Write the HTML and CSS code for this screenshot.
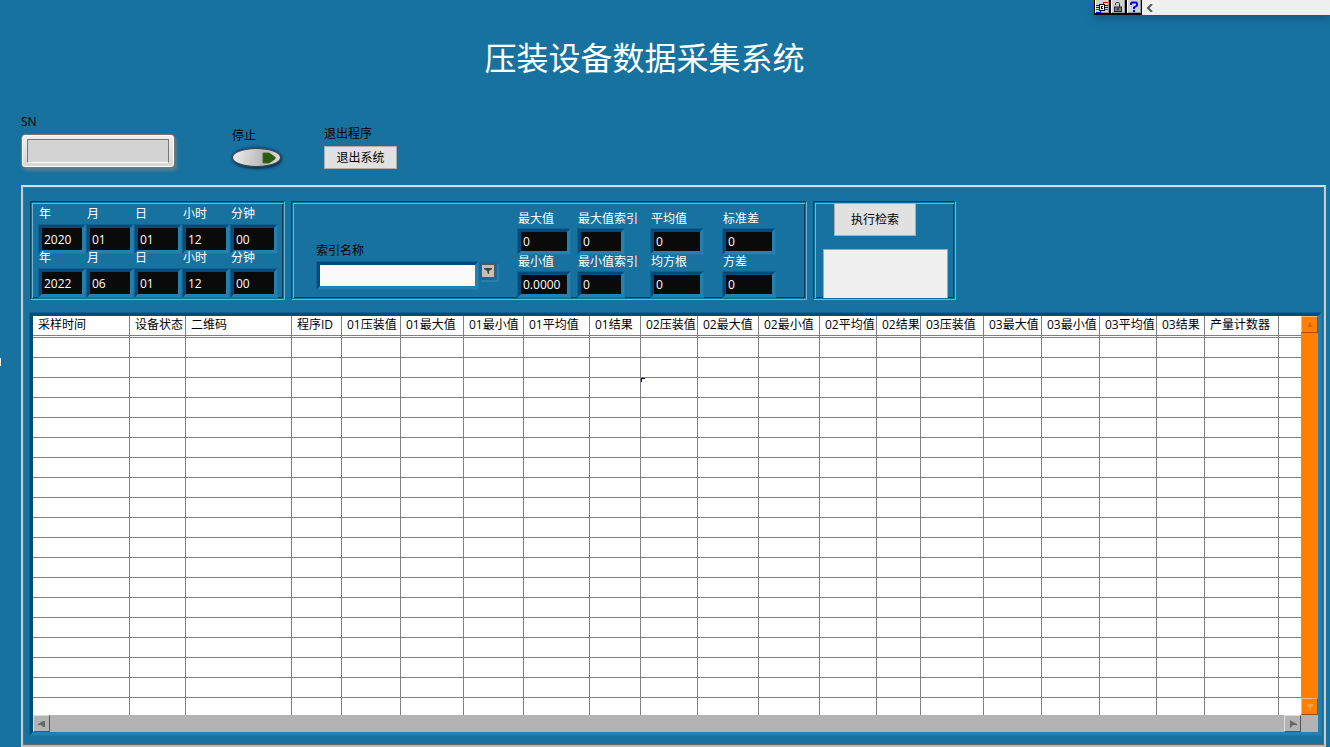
FILE: index.html
```html
<!DOCTYPE html>
<html lang="zh-CN">
<head>
<meta charset="utf-8">
<title>压装设备数据采集系统</title>
<link rel="stylesheet" href="styles.css">
</head>
<body>
<div class="tools">
  <button class="tool" type="button" aria-label="连线板">
    <svg viewBox="0 0 14 12" width="14" height="12" shape-rendering="crispEdges" fill="none">
      <path d="M1 4.500h4M1 6.500h4M1 11.500h4v-2" stroke="#00f"/><path d="M1 8.500h3M8.500 4V1.500H13" stroke="#e00"/><path d="M10 4.500h3M10 6.500h3" stroke="#00f"/><path d="M10 8.500h3" stroke="#e00"/>
      <rect x="4.500" y="3.500" width="5" height="6" fill="#fff" stroke="#000"/><path d="M6 5.500h2M6.500 5v3M6 7.500h2" stroke="#000"/>
    </svg>
  </button>
  <button class="tool" type="button" aria-label="锁定">
    <svg viewBox="0 0 14 12" width="14" height="12" fill="none">
      <path d="M4.500 4V2.500L5.500 1.500h2l1 1V6" stroke="#222"/><rect x="3.500" y="6" width="7" height="4.500" fill="#777" stroke="#222"/><path d="M7 7v2" stroke="#000"/>
    </svg>
  </button>
  <button class="tool" type="button" aria-label="帮助">
    <svg viewBox="0 0 14 12" width="14" height="12" fill="none">
      <path d="M4 4V2.500L5 1.500h4l1 1v2L7 6.500V8" stroke="#00f" stroke-width="2"/><path d="M6 10h2" stroke="#00f" stroke-width="2"/>
    </svg>
  </button>
  <button class="fold" type="button" aria-label="收起">
    <svg viewBox="0 0 8 8" width="8" height="8" fill="none"><path d="M6 0L2 4l4 4" stroke="#555" stroke-width="2"/></svg>
  </button>
</div>
<i class="edge-mark"></i>
<main class="page">
  <h1 class="title">压装设备数据采集系统</h1>
  <div class="controls">
    <div class="control sn">
      <label for="sn">SN</label>
      <div class="sn-frame"><input id="sn" type="text"></div>
    </div>
    <div class="control halt">
      <label for="stop">停止</label>
      <button id="stop" class="stop" type="button" aria-label="停止">
        <svg viewBox="0 0 14 12" width="14" height="12"><path d="M1 1h6l6 4v2l-6 4H1z" fill="#2c5a10" stroke="#3f6a22"/></svg>
      </button>
    </div>
    <div class="control">
      <label for="exit">退出程序</label>
      <button id="exit" class="push exit" type="button">退出系统</button>
    </div>
  </div>
  <section class="panel">
    <div class="groups">
      <div class="group dates">
        <div class="field"><label for="y1">年</label><input id="y1" value="2020"></div>
        <div class="field"><label for="m1">月</label><input id="m1" value="01"></div>
        <div class="field"><label for="d1">日</label><input id="d1" value="01"></div>
        <div class="field"><label for="h1">小时</label><input id="h1" value="12"></div>
        <div class="field"><label for="n1">分钟</label><input id="n1" value="00"></div>
        <div class="field"><label for="y2">年</label><input id="y2" value="2022"></div>
        <div class="field"><label for="m2">月</label><input id="m2" value="06"></div>
        <div class="field"><label for="d2">日</label><input id="d2" value="01"></div>
        <div class="field"><label for="h2">小时</label><input id="h2" value="12"></div>
        <div class="field"><label for="n2">分钟</label><input id="n2" value="00"></div>
      </div>
      <div class="group query">
        <div class="index">
          <label for="index">索引名称</label>
          <div class="combo">
            <input id="index" type="text">
            <button type="button" aria-label="展开">
              <svg viewBox="0 0 8 6" width="8" height="6"><path d="M0 0h8v1L5 3v3H4L3 3 0 1z" fill="#444"/></svg>
            </button>
          </div>
        </div>
        <div class="stats">
          <div class="field"><label for="max">最大值</label><input id="max" value="0"></div>
          <div class="field short"><label for="maxi">最大值索引</label><input id="maxi" value="0"></div>
          <div class="field"><label for="avg">平均值</label><input id="avg" value="0"></div>
          <div class="field"><label for="std">标准差</label><input id="std" value="0"></div>
          <div class="field"><label for="min">最小值</label><input id="min" value="0.0000"></div>
          <div class="field short"><label for="mini">最小值索引</label><input id="mini" value="0"></div>
          <div class="field"><label for="rms">均方根</label><input id="rms" value="0"></div>
          <div class="field"><label for="var">方差</label><input id="var" value="0"></div>
        </div>
      </div>
      <div class="group search">
        <button class="push run" type="button">执行检索</button>
        <div class="output"></div>
      </div>
    </div>
    <div class="grid-box">
      <div class="grid-main">
        <div class="viewport">
          <table class="records">
            <colgroup>
              <col class="w97"><col class="w56"><col class="w106"><col class="w50"><col class="w59"><col class="w63"><col class="w60"><col class="w66"><col class="w51"><col class="w57"><col class="w61"><col class="w61"><col class="w57"><col class="w44"><col class="w63"><col class="w58"><col class="w58"><col class="w57"><col class="w48"><col class="w74"><col>
            </colgroup>
            <thead>
              <tr><th>采样时间</th><th>设备状态</th><th>二维码</th><th>程序ID</th><th>01压装值</th><th>01最大值</th><th>01最小值</th><th>01平均值</th><th>01结果</th><th>02压装值</th><th>02最大值</th><th>02最小值</th><th>02平均值</th><th>02结果</th><th>03压装值</th><th>03最大值</th><th>03最小值</th><th>03平均值</th><th>03结果</th><th>产量计数器</th><th></th></tr>
            </thead>
            <tbody id="rows"></tbody>
          </table>
        </div>
        <div class="vbar">
          <button type="button" aria-label="向上"><svg viewBox="0 0 6 6" width="6" height="6"><path d="M3 0l3 5H0z" fill="#d9661a"/></svg></button>
          <button type="button" aria-label="向下"><svg viewBox="0 0 6 6" width="6" height="6"><path d="M0 0h6v2L4 3v3H3L2 3 0 2z" fill="#ffa050"/></svg></button>
        </div>
      </div>
      <div class="hbar">
        <button type="button" aria-label="向左"><svg viewBox="0 0 8 8" width="8" height="8"><path d="M0 4l5-3h2v6H5L3 5H0z" fill="#666"/></svg></button>
        <button type="button" aria-label="向右"><svg viewBox="0 0 8 8" width="8" height="8"><path d="M1 0l3 2 4 2v1H4L1 8z" fill="#666"/></svg></button>
      </div>
    </div>
  </section>
</main>
<script src="rows.js"></script>
</body>
</html>
```

FILE: rows.js
```js
const body = document.getElementById("rows");
for (let r = 0; r < 19; r++) {
  const row = body.insertRow();
  for (let c = 0; c < 21; c++) {
    const cell = row.insertCell();
    if (r === 2 && c === 9) cell.className = "cursor";
  }
}
```

FILE: styles.css
```css
* { box-sizing: border-box; }

body {
  margin: 0;
  background: #1872a0;
  color: #000;
  font: 12px/16px "Open Sans", "Noto Sans CJK SC", sans-serif;
}

button, input {
  margin: 0;
  padding: 0;
  font: inherit;
  border-radius: 0;
}

label { white-space: nowrap; }
svg { display: block; }

.page {
  display: flex;
  flex-direction: column;
  height: 100vh;
  padding: 38px 4px 0 21px;
}

.title {
  margin: 0 58px 36px 0;
  color: #fff;
  font-size: 32px;
  font-weight: 400;
  line-height: 40px;
  text-align: center;
}

/* floating tool strip */
.tools {
  position: absolute;
  top: 0;
  right: 0;
  display: flex;
  width: 236px;
  height: 15px;
  background: #f0f0f0;
  box-shadow: 0 3px 8px rgba(0, 30, 60, 0.35);
}

.tool {
  width: 16px;
  height: 15px;
  overflow: hidden;
  background: #d0d0d0;
  border: solid #000;
  border-width: 0 1px 2px 1px;
  box-shadow: inset 1px 0 #fff, inset -1px -1px #999;
}

.fold {
  display: flex;
  align-items: center;
  margin-left: 4px;
  background: none;
  border: 0;
}

.edge-mark {
  position: absolute;
  top: 358px;
  left: 0;
  width: 1px;
  height: 8px;
  background: #fff;
}

/* top controls */
.controls {
  display: grid;
  grid-template-columns: 211px 92px auto;
  align-items: end;
  justify-content: start;
  margin-bottom: 16px;
}

.control {
  display: flex;
  flex-direction: column;
  align-items: flex-start;
  gap: 4px;
}

.sn { padding-bottom: 1px; }
.halt { padding-bottom: 2px; }

.sn-frame {
  width: 154px;
  height: 34px;
  padding: 4px 5px;
  background: linear-gradient(#efefef, #d6d6d6);
  border: 1px solid #777;
  border-radius: 4px;
  box-shadow: inset 0 0 0 1px #fff, 2px 3px 3px rgba(110, 130, 140, 0.7);
}

.sn-frame input {
  display: block;
  width: 100%;
  height: 100%;
  background: #d3d3d3;
  border: 1px solid #777;
  border-bottom-color: #fff;
}

.stop {
  display: flex;
  align-items: center;
  justify-content: flex-end;
  width: 49px;
  height: 19px;
  padding-right: 4px;
  background: linear-gradient(100deg, #eee, #bbb 60%, #ddd);
  border: 1px solid #444;
  border-radius: 50%;
  box-shadow: 1px 2px 3px rgba(0, 25, 50, 0.7), 0 -1px 3px rgba(0, 60, 110, 0.8);
}

.push {
  background: #e1e1e1;
  border: 1px solid #adadad;
  color: #000;
}

.exit { width: 73px; height: 23px; }

/* main panel */
.panel {
  flex: 1;
  display: flex;
  flex-direction: column;
  min-height: 0;
  padding: 14px 2px 8px 5px;
  border: solid;
  border-color: #ddd #ccc #bbb #ccc;
  border-width: 2px 2px 3px 3px;
  outline: 1px solid #666;
  outline-offset: -3px;
}

.groups {
  display: flex;
  align-items: flex-start;
  gap: 6px;
  margin: 0 0 12px 1px;
}

.group {
  flex: none;
  height: 99px;
  border: 1px solid;
  border-color: #00405c #6fb6d3 #6fb6d3 #00405c;
  box-shadow: inset 0 0 0 1px #0c7197, inset 2px 2px #6fb6d3, inset -2px -2px #00405c;
}

.dates {
  display: grid;
  grid-template-columns: repeat(5, 48px);
  grid-auto-rows: 44px;
  width: 255px;
  padding: 4px 6px 0 7px;
}

.field {
  position: relative;
  display: flex;
  flex-direction: column;
  align-items: flex-start;
  gap: 2px;
  color: #fff;
}

.field label { padding-left: 1px; }

.field input, .combo input {
  flex: none;
  width: 100%;
  border: 4px solid;
  border-color: #004a7c #2580b0 #2580b0 #004a7c;
  outline: 1px solid rgba(24, 114, 160, 0.6);
  outline-offset: -1px;
}

.field input {
  padding-left: 2px;
  background: #0a0a0a;
  color: #fff;
}

.dates .field input { height: 30px; }

.query {
  display: flex;
  width: 516px;
  padding: 9px 0 0 24px;
}

.index {
  width: 201px;
  padding-top: 32px;
}

.index label { display: block; margin-bottom: 2px; }

.combo { display: flex; align-items: flex-start; }

.combo input {
  width: 163px;
  height: 29px;
  background: #fafafa;
}

.combo button {
  display: flex;
  align-items: center;
  justify-content: center;
  width: 14px;
  height: 14px;
  margin: 3px 2px;
  background: #c0c0c0;
  border: 1px solid #555;
  box-shadow: 0 0 0 2px #1f659a, 2px 2px 0 2px #2580b0;
}

.stats {
  display: grid;
  grid-template-columns: 60px 73px 72px 54px;
  grid-auto-rows: 43px;
}

.stats .field { gap: 1px; }
.stats .field input { width: 54px; height: 27px; }
.stats .field.short input { width: 48px; }

.search {
  display: flex;
  flex-direction: column;
  align-items: flex-start;
  gap: 13px;
  width: 143px;
  padding: 1px 7px 1px 9px;
}

.run { width: 82px; height: 33px; margin-left: 11px; }

.output {
  flex: 1;
  align-self: stretch;
  background: #f0f0f0;
  border: solid #9aa8b8;
  border-width: 1px 1px 0;
}

/* record table */
.grid-box {
  flex: 1;
  display: flex;
  flex-direction: column;
  min-height: 0;
  border: 4px solid;
  border-color: #004a7c #2580b0 #2580b0 #004a7c;
  outline: 1px solid rgba(24, 114, 160, 0.6);
  outline-offset: -1px;
}

.grid-main { flex: 1; display: flex; min-height: 0; }

.viewport { flex: 1; min-width: 0; overflow: hidden; background: #fff; }

.records {
  width: 100%;
  table-layout: fixed;
  border-spacing: 0;
}

.records th {
  height: 22px;
  padding: 0 0 2px 5px;
  border-right: 1px solid #808080;
  border-bottom: 3px double #808080;
  font-weight: 400;
  text-align: left;
  white-space: nowrap;
  line-height: 16px;
}

.records td {
  height: 20px;
  padding: 0;
  border: solid #808080;
  border-width: 0 1px 1px 0;
}

.records th:last-child, .records td:last-child { border-right: 0; }

.cursor { position: relative; }

.cursor::before {
  content: "";
  position: absolute;
  top: 0;
  left: 0;
  width: 3px;
  height: 3px;
  border: solid #000080;
  border-width: 1px 0 0 1px;
}

.w44 { width: 44px; }
.w48 { width: 48px; }
.w50 { width: 50px; }
.w51 { width: 51px; }
.w56 { width: 56px; }
.w57 { width: 57px; }
.w58 { width: 58px; }
.w59 { width: 59px; }
.w60 { width: 60px; }
.w61 { width: 61px; }
.w63 { width: 63px; }
.w66 { width: 66px; }
.w74 { width: 74px; }
.w97 { width: 97px; }
.w106 { width: 106px; }

.vbar, .hbar { display: flex; justify-content: space-between; }

.vbar {
  flex-direction: column;
  width: 17px;
  background: #ff8000;
}

.hbar {
  flex: none;
  height: 17px;
  padding-right: 17px;
  background: #b3b3b3;
}

.vbar button, .hbar button {
  display: flex;
  align-items: center;
  justify-content: center;
  width: 17px;
  height: 17px;
  border: 1px solid;
}

.vbar button { background: #ff8000; border-color: #ffb870 #a04c00 #a04c00 #ffb870; }
.hbar button { background: #b3b3b3; border-color: #ddd #555 #555 #ddd; }
```
